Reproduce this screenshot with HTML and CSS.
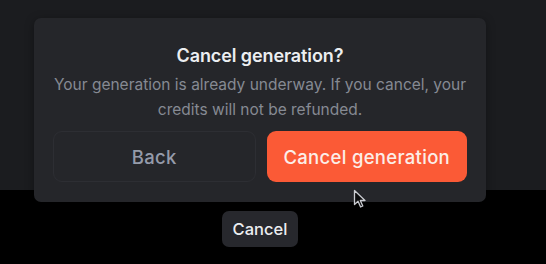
FILE: index.html
```html
<!DOCTYPE html>
<html lang="en">
<head>
<meta charset="utf-8">
<title>Cancel generation</title>
<link rel="stylesheet" href="styles.css">
</head>
<body>
<div class="page">
  <div class="dialog">
    <h2 class="title">Cancel generation?</h2>
    <p class="message">Your generation is already underway. If you cancel, your credits will not be refunded.</p>
    <div class="actions">
      <button class="btn btn-back">Back</button>
      <button class="btn btn-danger">Cancel generation</button>
    </div>
  </div>
  <button class="pill">Cancel</button>
</div>
<svg class="cursor" width="14" height="20" viewBox="0 0 14 20" aria-hidden="true">
  <path d="M1.5 1.5 L1.5 15.5 L5 12.3 L7.6 18 L9.8 17 L7.3 11.5 L12 11.5 Z" fill="#0b0b0c" stroke="#c9cbd0" stroke-width="1.3" stroke-linejoin="round"/>
</svg>
</body>
</html>
```
FILE: styles.css
```css
* { box-sizing: border-box; }
html, body { margin: 0; padding: 0; }
body {
  width: 546px;
  height: 264px;
  overflow: hidden;
  background: linear-gradient(#1b1c1f 0, #1b1c1f 190px, #000 190px, #000 100%);
  font-family: Inter, "Noto Sans", sans-serif;
  position: relative;
}
.page {
  width: 452px;
  margin-left: 34px;
  padding-top: 18px;
  display: flex;
  flex-direction: column;
  align-items: center;
}
.dialog {
  width: 452px;
  height: 184px;
  background: #25262a;
  border-radius: 7px;
  padding: 27px 19px 20px;
  display: flex;
  flex-direction: column;
  align-items: center;
  box-shadow: 0 2px 10px rgba(0,0,0,0.35);
}
.title {
  margin: 0;
  font-size: 18px;
  line-height: 22px;
  font-weight: 600;
  color: #eceef1;
  letter-spacing: -0.1px;
}
.message {
  margin: 5px 0 0;
  font-size: 15.5px;
  line-height: 25px;
  color: #868a93;
  text-align: center;
  letter-spacing: 0;
}
.actions {
  margin-top: auto;
  width: 100%;
  display: flex;
  gap: 11px;
}
.btn {
  flex: 1;
  height: 51px;
  border-radius: 9px;
  font-family: inherit;
  font-size: 18.5px;
  font-weight: 500;
  letter-spacing: 0.3px;
  cursor: pointer;
}
.btn-back {
  background: #25262a;
  border: 1px solid #2d2e33;
  color: #959baa;
}
.btn-danger {
  background: #fb5a36;
  border: none;
  color: #fbeee8;
}
.pill {
  margin-top: 9px;
  height: 36px;
  padding: 0 11px;
  border: none;
  border-radius: 7px;
  background: #27282d;
  color: #eceef1;
  font-family: inherit;
  font-size: 16.5px;
  font-weight: 500;
  letter-spacing: 0;
}
.cursor {
  position: absolute;
  left: 353px;
  top: 189px;
}
```
